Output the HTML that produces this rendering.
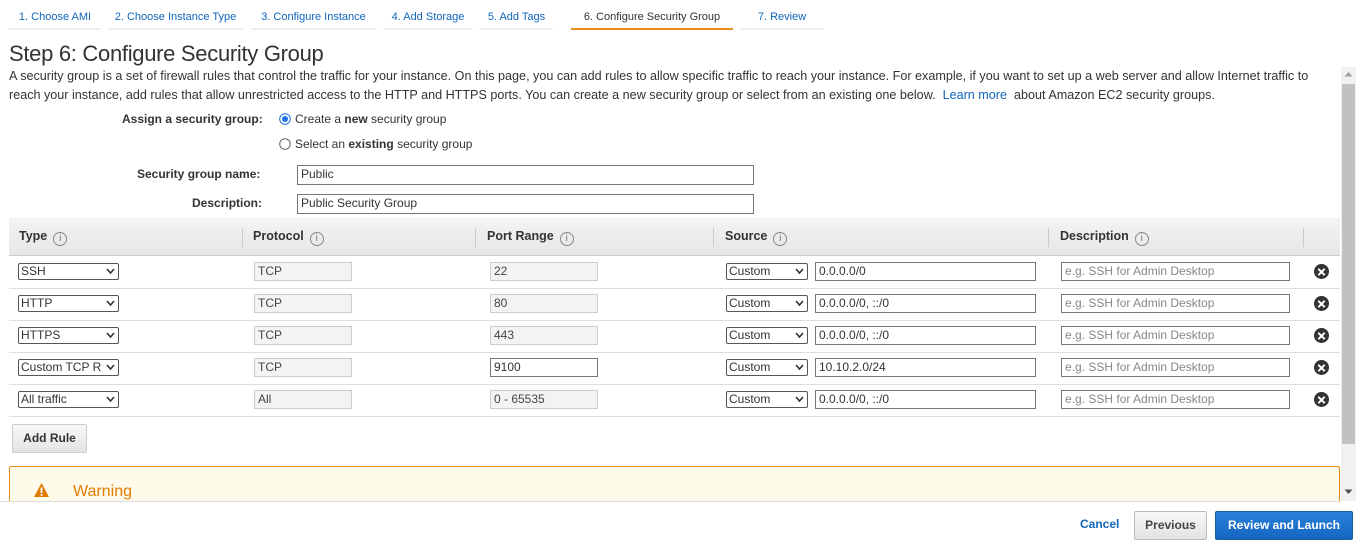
<!DOCTYPE html>
<html><head><style>
*{box-sizing:border-box;margin:0;padding:0}
body{width:1361px;height:547px;overflow:hidden;background:#fff;font-family:"Liberation Sans",Arial,sans-serif;font-size:12px;color:#333;position:relative}
.a{position:absolute;white-space:nowrap}
.tab{position:absolute;top:0;height:30px;line-height:34px;font-size:11px;color:#1166bb;text-align:center;border-bottom:2px solid #eee}
.inp{position:absolute;height:19px;border:1px solid #999;background:#fff;font-size:12px;line-height:17px;padding-left:3px;color:#333;white-space:nowrap;overflow:hidden}
.ro{background:#f3f3f3;border-color:#ccc;color:#444}
.ph{color:#888}
.sel{position:absolute;height:17px;border:1px solid #555;border-radius:2px;background:#fff;font-size:12px;line-height:15px;padding-left:2px;white-space:nowrap;overflow:hidden}
.sel svg{position:absolute;right:3px;top:4px}
.info{display:inline-block;width:14px;height:14px;border:1px solid #888;border-radius:50%;font-size:10px;line-height:12px;text-align:center;color:#777;margin-left:6px;vertical-align:-1px;font-weight:normal}
.th{position:absolute;top:229px;font-weight:bold;font-size:12.5px;color:#333}
.div{position:absolute;top:228px;width:1px;height:19px;background:#ccc}
.row{position:absolute;left:9px;width:1331px;height:1px;background:#ddd}
.x{position:absolute;width:15px;height:15px;border-radius:50%;background:#333}
.x:before,.x:after{content:"";position:absolute;left:3px;top:6.5px;width:9px;height:2px;background:#fff;transform:rotate(45deg)}
.x:after{transform:rotate(-45deg)}
</style></head><body>
<div class="tab" style="left:9px;width:92px">1. Choose AMI</div>
<div class="tab" style="left:108px;width:135px">2. Choose Instance Type</div>
<div class="tab" style="left:251px;width:125px">3. Configure Instance</div>
<div class="tab" style="left:383px;width:90px">4. Add Storage</div>
<div class="tab" style="left:480px;width:73px">5. Add Tags</div>
<div class="tab" style="left:571px;width:162px;color:#333;border-bottom-color:#e88c1f">6. Configure Security Group</div>
<div class="tab" style="left:740px;width:84px">7. Review</div>

<div class="a" style="left:9px;top:41px;font-size:22px;color:#333;letter-spacing:-0.3px">Step 6: Configure Security Group</div>
<div class="a" style="left:9px;top:67px;line-height:19px;font-size:12.6px">A security group is a set of firewall rules that control the traffic for your instance. On this page, you can add rules to allow specific traffic to reach your instance. For example, if you want to set up a web server and allow Internet traffic to<br>reach your instance, add rules that allow unrestricted access to the HTTP and HTTPS ports. You can create a new security group or select from an existing one below. &nbsp;<span style="color:#1166bb">Learn more</span> &nbsp;about Amazon EC2 security groups.</div>

<div class="a" style="left:122px;top:112px;font-weight:bold">Assign a security group:</div>
<svg class="a" style="left:279px;top:113px" width="12" height="12"><circle cx="6" cy="6" r="5.3" fill="#fff" stroke="#1a73e8"/><circle cx="6" cy="6" r="3" fill="#1a73e8"/></svg>
<div class="a" style="left:295px;top:112px">Create a <b>new</b> security group</div>
<svg class="a" style="left:279px;top:138px" width="12" height="12"><circle cx="6" cy="6" r="5.3" fill="#fff" stroke="#666"/></svg>
<div class="a" style="left:295px;top:137px">Select an <b>existing</b> security group</div>
<div class="a" style="left:137px;top:167px;font-weight:bold">Security group name:</div>
<div class="inp" style="left:297px;top:165px;width:457px;height:20px;border-color:#777">Public</div>
<div class="a" style="left:192px;top:196px;font-weight:bold">Description:</div>
<div class="inp" style="left:297px;top:194px;width:457px;height:20px;border-color:#777">Public Security Group</div>

<div class="a" style="left:9px;top:218px;width:1331px;height:38px;background:linear-gradient(#f4f4f4,#e6e6e6);border-bottom:1px solid #ccc"></div>
<div class="th" style="left:19px">Type<span class="info">i</span></div>
<div class="div" style="left:242px"></div>
<div class="th" style="left:253px">Protocol<span class="info">i</span></div>
<div class="div" style="left:475px"></div>
<div class="th" style="left:487px">Port Range<span class="info">i</span></div>
<div class="div" style="left:713px"></div>
<div class="th" style="left:725px">Source<span class="info">i</span></div>
<div class="div" style="left:1048px"></div>
<div class="th" style="left:1060px">Description<span class="info">i</span></div>
<div class="div" style="left:1303px"></div>

<div class="sel" style="left:18px;top:263px;width:101px">SSH<svg width="9" height="7"><path d="M1 1l3.5 4L8 1" stroke="#333" stroke-width="1.6" fill="none"/></svg></div>
<div class="inp ro" style="left:254px;top:262px;width:98px">TCP</div>
<div class="inp ro" style="left:490px;top:262px;width:108px">22</div>
<div class="sel" style="left:726px;top:263px;width:82px">Custom<svg width="9" height="7"><path d="M1 1l3.5 4L8 1" stroke="#333" stroke-width="1.6" fill="none"/></svg></div>
<div class="inp" style="left:815px;top:262px;width:221px;border-color:#777">0.0.0.0/0</div>
<div class="inp ph" style="left:1061px;top:262px;width:229px;border-color:#777">e.g. SSH for Admin Desktop</div>
<div class="x" style="left:1314px;top:264px"></div>
<div class="row" style="top:288px"></div>

<div class="sel" style="left:18px;top:295px;width:101px">HTTP<svg width="9" height="7"><path d="M1 1l3.5 4L8 1" stroke="#333" stroke-width="1.6" fill="none"/></svg></div>
<div class="inp ro" style="left:254px;top:294px;width:98px">TCP</div>
<div class="inp ro" style="left:490px;top:294px;width:108px">80</div>
<div class="sel" style="left:726px;top:295px;width:82px">Custom<svg width="9" height="7"><path d="M1 1l3.5 4L8 1" stroke="#333" stroke-width="1.6" fill="none"/></svg></div>
<div class="inp" style="left:815px;top:294px;width:221px;border-color:#777">0.0.0.0/0, ::/0</div>
<div class="inp ph" style="left:1061px;top:294px;width:229px;border-color:#777">e.g. SSH for Admin Desktop</div>
<div class="x" style="left:1314px;top:296px"></div>
<div class="row" style="top:320px"></div>

<div class="sel" style="left:18px;top:327px;width:101px">HTTPS<svg width="9" height="7"><path d="M1 1l3.5 4L8 1" stroke="#333" stroke-width="1.6" fill="none"/></svg></div>
<div class="inp ro" style="left:254px;top:326px;width:98px">TCP</div>
<div class="inp ro" style="left:490px;top:326px;width:108px">443</div>
<div class="sel" style="left:726px;top:327px;width:82px">Custom<svg width="9" height="7"><path d="M1 1l3.5 4L8 1" stroke="#333" stroke-width="1.6" fill="none"/></svg></div>
<div class="inp" style="left:815px;top:326px;width:221px;border-color:#777">0.0.0.0/0, ::/0</div>
<div class="inp ph" style="left:1061px;top:326px;width:229px;border-color:#777">e.g. SSH for Admin Desktop</div>
<div class="x" style="left:1314px;top:328px"></div>
<div class="row" style="top:352px"></div>

<div class="sel" style="left:18px;top:359px;width:101px">Custom TCP R<svg width="9" height="7" style="background:#fff"><path d="M1 1l3.5 4L8 1" stroke="#333" stroke-width="1.6" fill="none"/></svg></div>
<div class="inp ro" style="left:254px;top:358px;width:98px">TCP</div>
<div class="inp" style="left:490px;top:358px;width:108px;border-color:#777">9100</div>
<div class="sel" style="left:726px;top:359px;width:82px">Custom<svg width="9" height="7"><path d="M1 1l3.5 4L8 1" stroke="#333" stroke-width="1.6" fill="none"/></svg></div>
<div class="inp" style="left:815px;top:358px;width:221px;border-color:#777">10.10.2.0/24</div>
<div class="inp ph" style="left:1061px;top:358px;width:229px;border-color:#777">e.g. SSH for Admin Desktop</div>
<div class="x" style="left:1314px;top:360px"></div>
<div class="row" style="top:384px"></div>

<div class="sel" style="left:18px;top:391px;width:101px">All traffic<svg width="9" height="7"><path d="M1 1l3.5 4L8 1" stroke="#333" stroke-width="1.6" fill="none"/></svg></div>
<div class="inp ro" style="left:254px;top:390px;width:98px">All</div>
<div class="inp ro" style="left:490px;top:390px;width:108px">0 - 65535</div>
<div class="sel" style="left:726px;top:391px;width:82px">Custom<svg width="9" height="7"><path d="M1 1l3.5 4L8 1" stroke="#333" stroke-width="1.6" fill="none"/></svg></div>
<div class="inp" style="left:815px;top:390px;width:221px;border-color:#777">0.0.0.0/0, ::/0</div>
<div class="inp ph" style="left:1061px;top:390px;width:229px;border-color:#777">e.g. SSH for Admin Desktop</div>
<div class="x" style="left:1314px;top:392px"></div>
<div class="row" style="top:416px"></div>

<div class="a" style="left:12px;top:424px;width:75px;height:29px;border:1px solid #ccc;border-radius:2px;background:linear-gradient(#f8f8f8,#e4e4e4);font-weight:bold;text-align:center;line-height:27px;color:#333">Add Rule</div>

<div class="a" style="left:9px;top:466px;width:1331px;height:35px;background:#fffbea;border:1px solid #e88c1f;border-bottom:none;border-radius:2px 2px 0 0"></div>
<svg class="a" style="left:33px;top:482px" width="17" height="16"><path d="M8.5 1L16 15H1z" fill="#e07b00"/><rect x="7.6" y="5.5" width="1.8" height="5.5" fill="#fff"/><rect x="7.6" y="12" width="1.8" height="1.8" fill="#fff"/></svg>
<div class="a" style="left:73px;top:483px;font-size:16px;color:#e07b00">Warning</div>
<div class="a" style="left:0;top:501px;width:1341px;height:1px;background:#ddd"></div>

<div class="a" style="left:1341px;top:67px;width:15px;height:434px;background:#f1f1f1"></div>
<div class="a" style="left:1342px;top:84px;width:13px;height:360px;background:#c1c1c1"></div>
<svg class="a" style="left:1344px;top:71px" width="9" height="6"><path d="M0.5 5.5L4.5 1l4 4.5z" fill="#a3a3a3"/></svg>
<svg class="a" style="left:1344px;top:489px" width="9" height="6"><path d="M0.5 0.5L4.5 5l4-4.5z" fill="#505050"/></svg>

<div class="a" style="left:1080px;top:517px;font-weight:bold;color:#1166bb">Cancel</div>
<div class="a" style="left:1134px;top:511px;width:73px;height:29px;border:1px solid #bbb;border-radius:2px;background:linear-gradient(#f8f8f8,#e2e2e2);font-weight:bold;text-align:center;line-height:27px;color:#444">Previous</div>
<div class="a" style="left:1215px;top:511px;width:138px;height:29px;border:1px solid #1a5fa8;border-radius:2px;background:linear-gradient(#2a80d8,#1466c2);font-weight:bold;text-align:center;line-height:27px;color:#fff">Review and Launch</div>
</body></html>
